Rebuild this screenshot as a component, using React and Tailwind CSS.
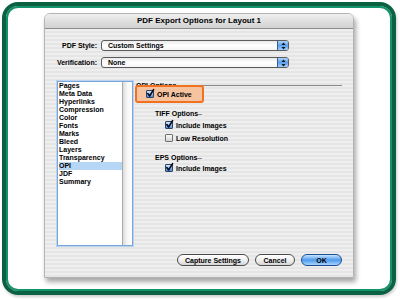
import React from "react";

const sections = [
    "Pages",
    "Meta Data",
    "Hyperlinks",
    "Compression",
    "Color",
    "Fonts",
    "Marks",
    "Bleed",
    "Layers",
    "Transparency",
    "OPI",
    "JDF",
    "Summary",
];

function Checkbox({ checked }) {
    if (checked) {
        return (
            <span className="relative w-[8px] h-[8px] shrink-0 rounded-[1px] border border-[#2c4468] bg-gradient-to-b from-[#d6eaff] to-[#4f90df]">
                <svg className="absolute -left-[1px] -top-[2px] overflow-visible" width="9" height="9" viewBox="0 0 9 9">
                    <path d="M1.8 4.6 L3.6 7 L7.6 0.6" fill="none" stroke="#0a0a1a" strokeWidth="1.6" strokeLinecap="round" strokeLinejoin="round" />
                </svg>
            </span>
        );
    }
    return <span className="w-[8px] h-[8px] shrink-0 rounded-[1px] border border-[#6f6f6f] bg-gradient-to-b from-[#fbfbfb] to-[#d4d4d4]" />;
}

function Popup({ value }) {
    return (
        <div className="w-[188px] h-[11px] flex rounded-[3px] border border-[#5c5c5c] bg-gradient-to-b from-[#e9e9e9] via-white to-[#f4f4f4] overflow-hidden">
            <span className="flex-1 pl-[6px] text-[7px] leading-[9px] font-bold text-black">{value}</span>
            <span className="w-[11px] h-full flex items-center justify-center border-l border-[#3a5f94] bg-gradient-to-b from-[#a9d3fb] via-[#5aa0ec] to-[#9ed0ff]">
                <svg width="5" height="8" viewBox="0 0 5 8">
                    <path d="M2.5 0.5 L4.5 3 L0.5 3 Z" fill="#111" />
                    <path d="M2.5 7.5 L4.5 5 L0.5 5 Z" fill="#111" />
                </svg>
            </span>
        </div>
    );
}

function GroupTitle({ label }) {
    return (
        <div className="ml-[19px] w-[47px] h-[10px] flex items-center">
            <span className="text-[7px] font-bold leading-none whitespace-nowrap">{label}</span>
            <span className="flex-1 h-px mt-[3px] bg-[#8a8a8a]" />
        </div>
    );
}

export default function App() {
    return (
        <div className="w-[400px] h-[300px] bg-white pt-[2px] pl-[2px] font-['Liberation_Sans',Arial,sans-serif] text-black">
            {/* green frame */}
            <div className="w-[394px] h-[293px] rounded-[16px] border-[4px] border-[#0a6242] shadow-[inset_0_0_0_2px_#14936a,1px_2px_3px_rgba(0,0,0,0.2)] pt-[7px] pl-[38px]">
                {/* dialog window */}
                <div className="w-[310px] h-[265px] flex flex-col rounded-t-[6px] overflow-hidden shadow-[2px_4px_5px_rgba(0,0,0,0.35)] border border-[#b4b4b4]">
                    <div className="h-[15px] shrink-0 flex items-center justify-center border-b border-[#8c8c8c] bg-gradient-to-b from-[#efefef] to-[#d2d2d2]">
                        <span className="text-[8px] font-bold leading-none">PDF Export Options for Layout 1</span>
                    </div>

                    <div className="flex-1 flex flex-col pt-[11px] bg-[repeating-linear-gradient(to_bottom,#eeeeee_0px,#eeeeee_2px,#e5e5e5_2px,#e5e5e5_4px)]">
                        <div className="flex items-center gap-[4px]">
                            <span className="w-[52px] text-right text-[7px] font-bold leading-none">PDF Style:</span>
                            <Popup value="Custom Settings" />
                        </div>
                        <div className="flex items-center gap-[4px] mt-[6px]">
                            <span className="w-[52px] text-right text-[7px] font-bold leading-none">Verification:</span>
                            <Popup value="None" />
                        </div>

                        <div className="flex gap-[3px] pl-[12px] mt-[13px] h-[165px]">
                            {/* section list */}
                            <div className="w-[76px] h-full flex bg-white border border-[#7aa6da] shadow-[0_0_0_1px_#b9d3f1]">
                                <ul className="flex-1 pl-[1px]">
                                    {sections.map((s) => (
                                        <li
                                            key={s}
                                            className={
                                                s === "OPI"
                                                    ? "h-[8px] text-[7px] font-bold leading-[8px] bg-[#b6d6f6]"
                                                    : "h-[8px] text-[7px] font-bold leading-[8px]"
                                            }
                                        >
                                            {s}
                                        </li>
                                    ))}
                                </ul>
                                <div className="w-[10px] h-full border-l border-[#a9a9a9] bg-gradient-to-r from-[#dcdcdc] via-[#f7f7f7] to-white" />
                            </div>

                            {/* OPI panel */}
                            <div className="relative w-[206px] flex flex-col">
                                <div className="h-[8px] flex items-center gap-[2px]">
                                    <span className="text-[7px] font-bold leading-none whitespace-nowrap">OPI Options</span>
                                    <span className="flex-1 h-px bg-[#8a8a8a]" />
                                </div>
                                <span className="absolute -left-[1px] top-[4px] w-[69px] h-[18px] rounded-[3px] border-2 border-[#f2701e] bg-[#f5c3a0]" />
                                <div className="relative h-[10px] flex items-center gap-[3px] pl-[10px]">
                                    <Checkbox checked />
                                    <span className="text-[7px] font-bold leading-none">OPI Active</span>
                                </div>

                                <div className="mt-[9px]">
                                    <GroupTitle label="TIFF Options" />
                                </div>
                                <div className="h-[10px] mt-[2px] flex items-center gap-[3px] pl-[29px]">
                                    <Checkbox checked />
                                    <span className="text-[7px] font-bold leading-none">Include Images</span>
                                </div>
                                <div className="h-[10px] mt-[3px] flex items-center gap-[3px] pl-[29px]">
                                    <Checkbox />
                                    <span className="text-[7px] font-bold leading-none">Low Resolution</span>
                                </div>

                                <div className="mt-[9px]">
                                    <GroupTitle label="EPS Options" />
                                </div>
                                <div className="h-[10px] mt-[1px] flex items-center gap-[3px] pl-[29px]">
                                    <Checkbox checked />
                                    <span className="text-[7px] font-bold leading-none">Include Images</span>
                                </div>
                            </div>
                        </div>

                        {/* buttons */}
                        <div className="flex justify-end gap-[6px] pr-[11px] mt-[8px]">
                            <button className="w-[72px] h-[12px] rounded-full border border-[#4a4a4a] bg-gradient-to-b from-white via-[#f0f0f0] to-[#d6d6d6] text-[7px] font-bold leading-none">
                                Capture Settings
                            </button>
                            <button className="w-[40px] h-[12px] rounded-full border border-[#4a4a4a] bg-gradient-to-b from-white via-[#f0f0f0] to-[#d6d6d6] text-[7px] font-bold leading-none">
                                Cancel
                            </button>
                            <button className="w-[41px] h-[12px] rounded-full border border-[#1f4f93] bg-gradient-to-b from-[#c6e3ff] via-[#4f9aec] to-[#a6d4ff] text-[7px] font-bold leading-none">
                                OK
                            </button>
                        </div>
                    </div>
                </div>
            </div>
        </div>
    );
}
